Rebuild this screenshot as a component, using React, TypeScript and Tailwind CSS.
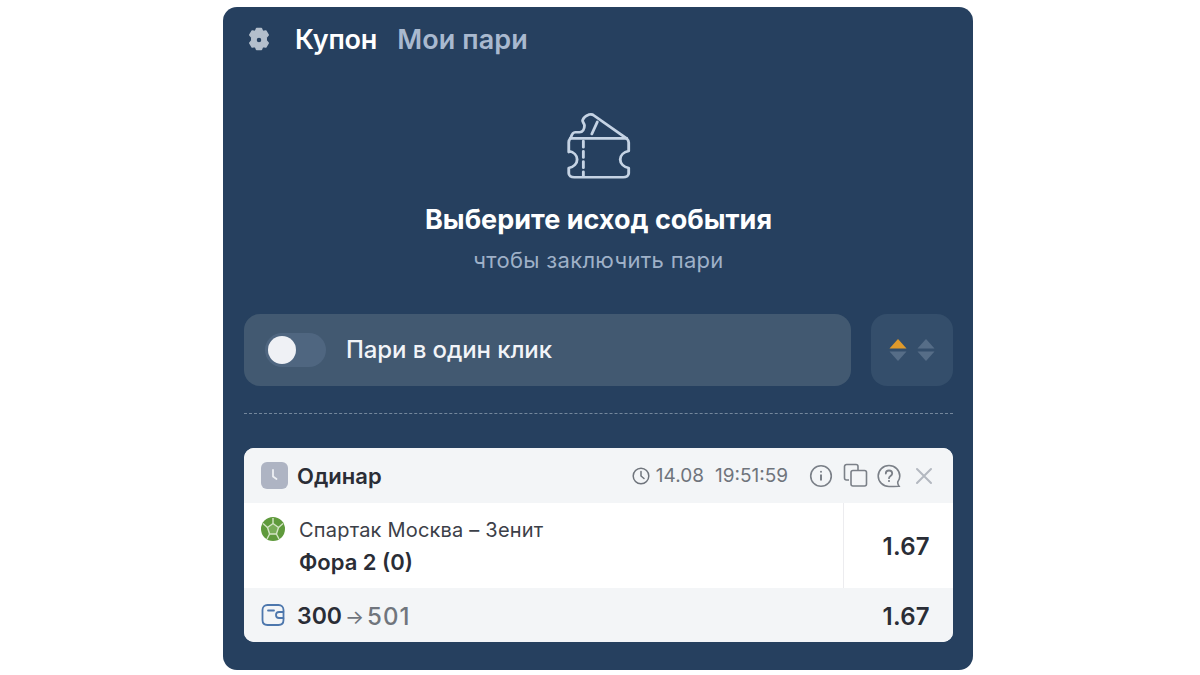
const font = { fontFamily: 'Inter, "Noto Sans", sans-serif' };

function GearIcon() {
  return (
    <svg width="26" height="26" viewBox="0 0 26 26" aria-hidden="true">
      <path
        fillRule="evenodd"
        fill="#b4bfcc"
        stroke="#b4bfcc"
        strokeWidth="1.500"
        strokeLinejoin="round"
        d="M10.600 1.400h4.800l1.200 3.100 3.200-.6 2.400 4.100-2.100 2.600c.2.900.2 1.900 0 2.800l2.100 2.600-2.400 4.100-3.200-.6-1.200 3.100h-4.800l-1.200-3.100-3.200.6-2.400-4.100 2.100-2.600c-.2-.9-.2-1.900 0-2.800L3.800 8l2.400-4.100 3.200.6 1.200-3.100zM13 10a3 3 0 1 0 0 6 3 3 0 0 0 0-6z"
      />
    </svg>
  );
}

function TicketIcon() {
  return (
    <svg className="overflow-visible" width="62" height="66" viewBox="3 1.500 56.500 64.500" preserveAspectRatio="none" fill="none" stroke="#c5d3e4" strokeWidth="2.600" strokeLinejoin="round" strokeLinecap="round" aria-hidden="true">
      <path d="M3.700 39.700V30c0-1.500.8-3 1.800-4 .8-2.800 1.500-5.700 4-5.700h4c2.800 0 4.500-3 4.500-6.600 0-2-2-3.400-1.700-5 .7-2.200 3.500-4.700 6-5.700 1.500-.4 3-.3 4 .7l30 22.600c1 1 2 2.500 2 4v8.400c-4.500 1-7.700 4.300-7.700 8.300s3.200 7.300 7.700 8.300v5c0 2.300-2 4-5 4H8.700c-3 0-5-1.700-5-4v-5c4.500-1 7.600-4.300 7.600-8.300s-3.100-7.300-7.600-8.300z" />
      <path d="M5 26.300h51.500" />
      <path d="M17 29v6M17 39v6M17 49v6M17 59v4" />
      <path d="M29.700 10.300L24.700 22" />
    </svg>
  );
}

function Arrows({ up, down }: { up: string; down: string }) {
  return (
    <svg width="18" height="24" viewBox="0 0 18 24" aria-hidden="true">
      <path d="M9 1 L17.500 10.500 H.500 Z" fill={up} />
      <path d="M.500 13.500 H17.500 L9 23 Z" fill={down} />
    </svg>
  );
}

function ClockBadge() {
  return (
    <div className="flex h-[27px] w-[27px] items-center justify-center rounded-[6px] bg-[#aeb4c3]">
      <svg width="15" height="15" viewBox="0 0 15 15" fill="none" stroke="#eef0f4" strokeWidth="1.800" strokeLinecap="round" strokeLinejoin="round" aria-hidden="true">
        <path d="M6 2v6.500l3.500 2.500" />
      </svg>
    </div>
  );
}

function HeaderIcons() {
  return (
    <div className="flex items-center text-[#7b8088]">
      <svg className="mr-[10px]" width="24" height="24" viewBox="0 0 24 24" fill="none" stroke="currentColor" aria-hidden="true">
        <circle cx="12" cy="12" r="10.300" strokeWidth="1.600" />
        <path d="M12 10.500v6" strokeWidth="2" />
        <circle cx="12" cy="7.800" r="1" fill="currentColor" stroke="none" />
      </svg>
      <svg className="mr-[9px]" width="25" height="25" viewBox="0 0 25 25" fill="none" stroke="currentColor" strokeWidth="1.600" aria-hidden="true">
        <path d="M6 17H3.500A2 2 0 0 1 1.500 15V3.500A2 2 0 0 1 3.500 1.500H13A2 2 0 0 1 15 3.500V7" />
        <rect x="8" y="7.500" width="15.500" height="15.500" rx="2" />
      </svg>
      <svg className="mr-[14px]" width="24" height="24" viewBox="0 0 24 24" fill="none" stroke="currentColor" aria-hidden="true">
        <path strokeWidth="1.600" d="M12 1.500C6 1.500 1.200 6.200 1.200 12S6 22.500 12 22.500c3 0 7-.1 10-.2-1-1.500-1.400-2.800-1.300-4.300 1.300-1.700 2.100-3.800 2.100-6C22.800 6.200 18 1.500 12 1.500z" />
        <path strokeWidth="1.800" strokeLinecap="round" d="M8.800 9.500c0-1.800 1.400-3 3.200-3s3.200 1.200 3.200 2.900c0 2.500-3.200 2.500-3.200 4.800" />
        <circle cx="12" cy="17" r="1.100" fill="currentColor" stroke="none" />
      </svg>
      <svg width="18" height="18" viewBox="0 0 18 18" fill="none" stroke="#b3b8c0" strokeWidth="2" strokeLinecap="round" aria-hidden="true">
        <path d="M2 2l14 14M16 2L2 16" />
      </svg>
    </div>
  );
}

function TeamBall() {
  return (
    <svg width="24" height="24" viewBox="0 0 24 24" aria-hidden="true">
      <circle cx="12" cy="12" r="12" fill="#5f9a3c" />
      <path d="M12 6.500l5.500 4-2.100 6.500H8.600l-2.100-6.500z" fill="#79ad58" stroke="#d3e4c4" strokeWidth="1.400" />
      <path d="M12 1v5.500M2 6.500l4.500 4M22 6.500l-4.500 4M6 22l2.600-5M18 22l-2.600-5" stroke="#d3e4c4" strokeWidth="1.400" />
    </svg>
  );
}

function WalletIcon() {
  return (
    <svg width="24" height="24" viewBox="0 0 24 24" fill="none" stroke="#4d77ad" strokeWidth="1.800" strokeLinecap="round" strokeLinejoin="round" aria-hidden="true">
      <path d="M22.500 8.500V7c0-3-2-5-5-5H6.500c-3 0-5 2-5 5v10c0 3 2 5 5 5h11c3 0 5-2 5-5v-1.500" />
      <path d="M22.500 9h-4.500a3 3 0 0 0 0 6h4.500z" />
      <path d="M7 7.500h6" />
    </svg>
  );
}

export default function App() {
  return (
    <div className="h-[675px] w-[1200px] overflow-hidden bg-white pt-[7px] pl-[223px]" style={font}>
      <div className="h-[663px] w-[750px] rounded-[14px] bg-[#26405f] pr-[20px] pl-[21px]">
        <div className="flex h-[66px] items-center pl-[2px]">
          <GearIcon />
          <span className="ml-[23px] text-[27px] font-semibold tracking-[-0.2px] text-white">Купон</span>
          <span className="ml-[20px] text-[27px] font-semibold tracking-[0.1px] text-[#a9b9cf]">Мои пари</span>
        </div>

        <div className="flex flex-col items-center">
          <div className="mt-[40px]">
            <TicketIcon />
          </div>
          <div className="mt-[23px] text-[27px] leading-[36px] font-bold text-white">Выберите исход события</div>
          <div className="mt-[8px] text-[22px] leading-[28px] tracking-[0.3px] text-[#9fb1c8]">чтобы заключить пари</div>
        </div>

        <div className="mt-[40px] flex gap-[20px]">
          <div className="flex h-[72px] w-[607px] items-center rounded-[16px] bg-[#425971] pl-[21px]">
            <div className="relative h-[34px] w-[61px] rounded-full bg-[#4f6680]">
              <span className="absolute top-[3px] left-[3px] h-[28px] w-[28px] rounded-full bg-[#eff1f5]" />
            </div>
            <span className="ml-[20px] text-[24px] font-medium tracking-[-0.1px] text-[#f2f4f8]">Пари в один клик</span>
          </div>
          <div className="flex h-[72px] w-[82px] items-center justify-center gap-[10px] rounded-[16px] bg-[#344e6b]">
            <Arrows up="#e09a2b" down="#566d87" />
            <Arrows up="#566d87" down="#566d87" />
          </div>
        </div>

        <div className="mt-[27px] border-t border-dashed border-[#74879c]" />

        <div className="mt-[34px] overflow-hidden rounded-[10px] bg-white">
          <div className="flex h-[55px] items-center bg-[#f3f5f7] pr-[20px] pl-[17px]">
            <ClockBadge />
            <span className="ml-[9px] pt-[2px] text-[22px] font-semibold text-[#2a2d36]">Одинар</span>
            <div className="ml-auto flex items-center">
              <svg width="18" height="18" viewBox="0 0 18 18" fill="none" stroke="#6f747c" strokeWidth="1.500" strokeLinecap="round" aria-hidden="true">
                <circle cx="9" cy="9" r="7.800" />
                <path d="M9 4.500V9l3 2.500" />
              </svg>
              <span className="ml-[6px] pt-[2px] text-[19px] text-[#6f747c]">14.08</span>
              <span className="mr-[21px] ml-[11px] pt-[2px] text-[19px] text-[#6f747c]">19:51:59</span>
              <HeaderIcons />
            </div>
          </div>

          <div className="flex h-[85px]">
            <div className="flex flex-1 items-start pt-[14px] pl-[17px]">
              <TeamBall />
              <div className="ml-[14px]">
                <div className="text-[20px] leading-[26px] tracking-[0.2px] text-[#3c4048]">Спартак Москва – Зенит</div>
                <div className="mt-[5px] text-[22px] leading-[28px] font-semibold text-[#2a2d36]">Фора 2 (0)</div>
              </div>
            </div>
            <div className="flex w-[110px] items-center justify-end border-l border-[#ececef] pt-[2px] pr-[23px] text-[24px] font-semibold tracking-[0.3px] text-[#2a2d36]">1.67</div>
          </div>

          <div className="flex h-[54px] items-center bg-[#f3f5f7] pr-[23px] pl-[17px]">
            <WalletIcon />
            <div className="ml-[12px] flex flex-1 items-center pt-[3px]">
              <span className="text-[23px] font-semibold text-[#2a2d36]">300</span>
              <span className="mx-[3px] text-[20px] text-[#6f747c]">→</span>
              <span className="text-[24px] font-medium tracking-[1px] text-[#70757d]">501</span>
              <span className="ml-auto text-[24px] font-semibold tracking-[0.3px] text-[#2a2d36]">1.67</span>
            </div>
          </div>
        </div>
      </div>
    </div>
  );
}
